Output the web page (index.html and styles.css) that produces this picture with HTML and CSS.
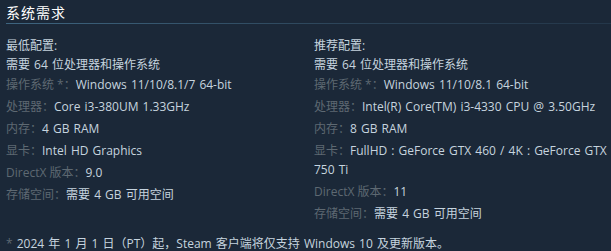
FILE: index.html
```html
<!DOCTYPE html>
<html lang="zh-CN">
<head>
<meta charset="utf-8">
<link rel="stylesheet" href="styles.css">
</head>
<body>
<div class="sysreq">
  <h2 class="title">系统需求</h2>
  <div class="cols">
    <div class="col">
      <div class="colhead">最低配置:</div>
      <ul class="reqs">
        <li class="first">需要 64 位处理器和操作系统</li>
        <li><span class="lbl">操作系统 *：</span>Windows 11/10/8.1/7 64-bit</li>
        <li><span class="lbl">处理器：</span>Core i3-380UM 1.33GHz</li>
        <li><span class="lbl">内存：</span>4 GB RAM</li>
        <li><span class="lbl">显卡：</span>Intel HD Graphics</li>
        <li><span class="lbl">DirectX 版本：</span>9.0</li>
        <li><span class="lbl">存储空间：</span>需要 4 GB 可用空间</li>
      </ul>
    </div>
    <div class="col">
      <div class="colhead">推荐配置:</div>
      <ul class="reqs">
        <li class="first">需要 64 位处理器和操作系统</li>
        <li><span class="lbl">操作系统 *：</span>Windows 11/10/8.1 64-bit</li>
        <li><span class="lbl">处理器：</span>Intel(R) Core(TM) i3-4330 CPU @ 3.50GHz</li>
        <li><span class="lbl">内存：</span>8 GB RAM</li>
        <li><span class="lbl">显卡：</span>FullHD : GeForce GTX 460 / 4K : GeForce GTX 750 Ti</li>
        <li><span class="lbl">DirectX 版本：</span>11</li>
        <li><span class="lbl">存储空间：</span>需要 4 GB 可用空间</li>
      </ul>
    </div>
  </div>
  <p class="note"><span class="ast">*</span> 2024 年 1 月 1 日（PT）起，Steam 客户端将仅支持 Windows 10 及更新版本。</p>
</div>
</body>
</html>
```

FILE: styles.css
```css
html, body {
  margin: 0;
  padding: 0;
  background: #1b2838;
}
body {
  width: 611px;
  height: 251px;
  overflow: hidden;
  font-family: "Open Sans", "Noto Sans CJK SC", sans-serif;
  font-size: 12px;
  word-spacing: 1px;
  color: #c6d4df;
}
.sysreq {
  padding: 0 0 0 6px;
}
.title {
  margin: 0;
  padding-top: 3px;
  height: 21px;
  font-size: 14px;
  font-weight: normal;
  line-height: 20px;
  letter-spacing: 1px;
  color: #ffffff;
  border-bottom: 1px solid transparent;
  background-image: linear-gradient(to right, #3e6580 0%, #2b4256 60%, #24374a 100%);
  background-size: 100% 1px;
  background-repeat: no-repeat;
  background-position: left bottom;
}
.cols {
  display: grid;
  grid-template-columns: 308px 1fr;
  margin-top: 11px;
}
.colhead {
  line-height: 19px;
  color: #c6d4df;
}
.reqs {
  list-style: none;
  margin: 0;
  padding: 0;
}
.reqs li {
  line-height: 19px;
  margin-bottom: 3px;
  color: #c6d4df;
}
.reqs li.first {
  margin-bottom: 1px;
}
.lbl {
  color: #5e6972;
  word-spacing: 0;
}
.note {
  margin: 8px 0 0;
  line-height: 19px;
  color: #c6d4df;
}
.ast {
  color: #5e6972;
}
```
